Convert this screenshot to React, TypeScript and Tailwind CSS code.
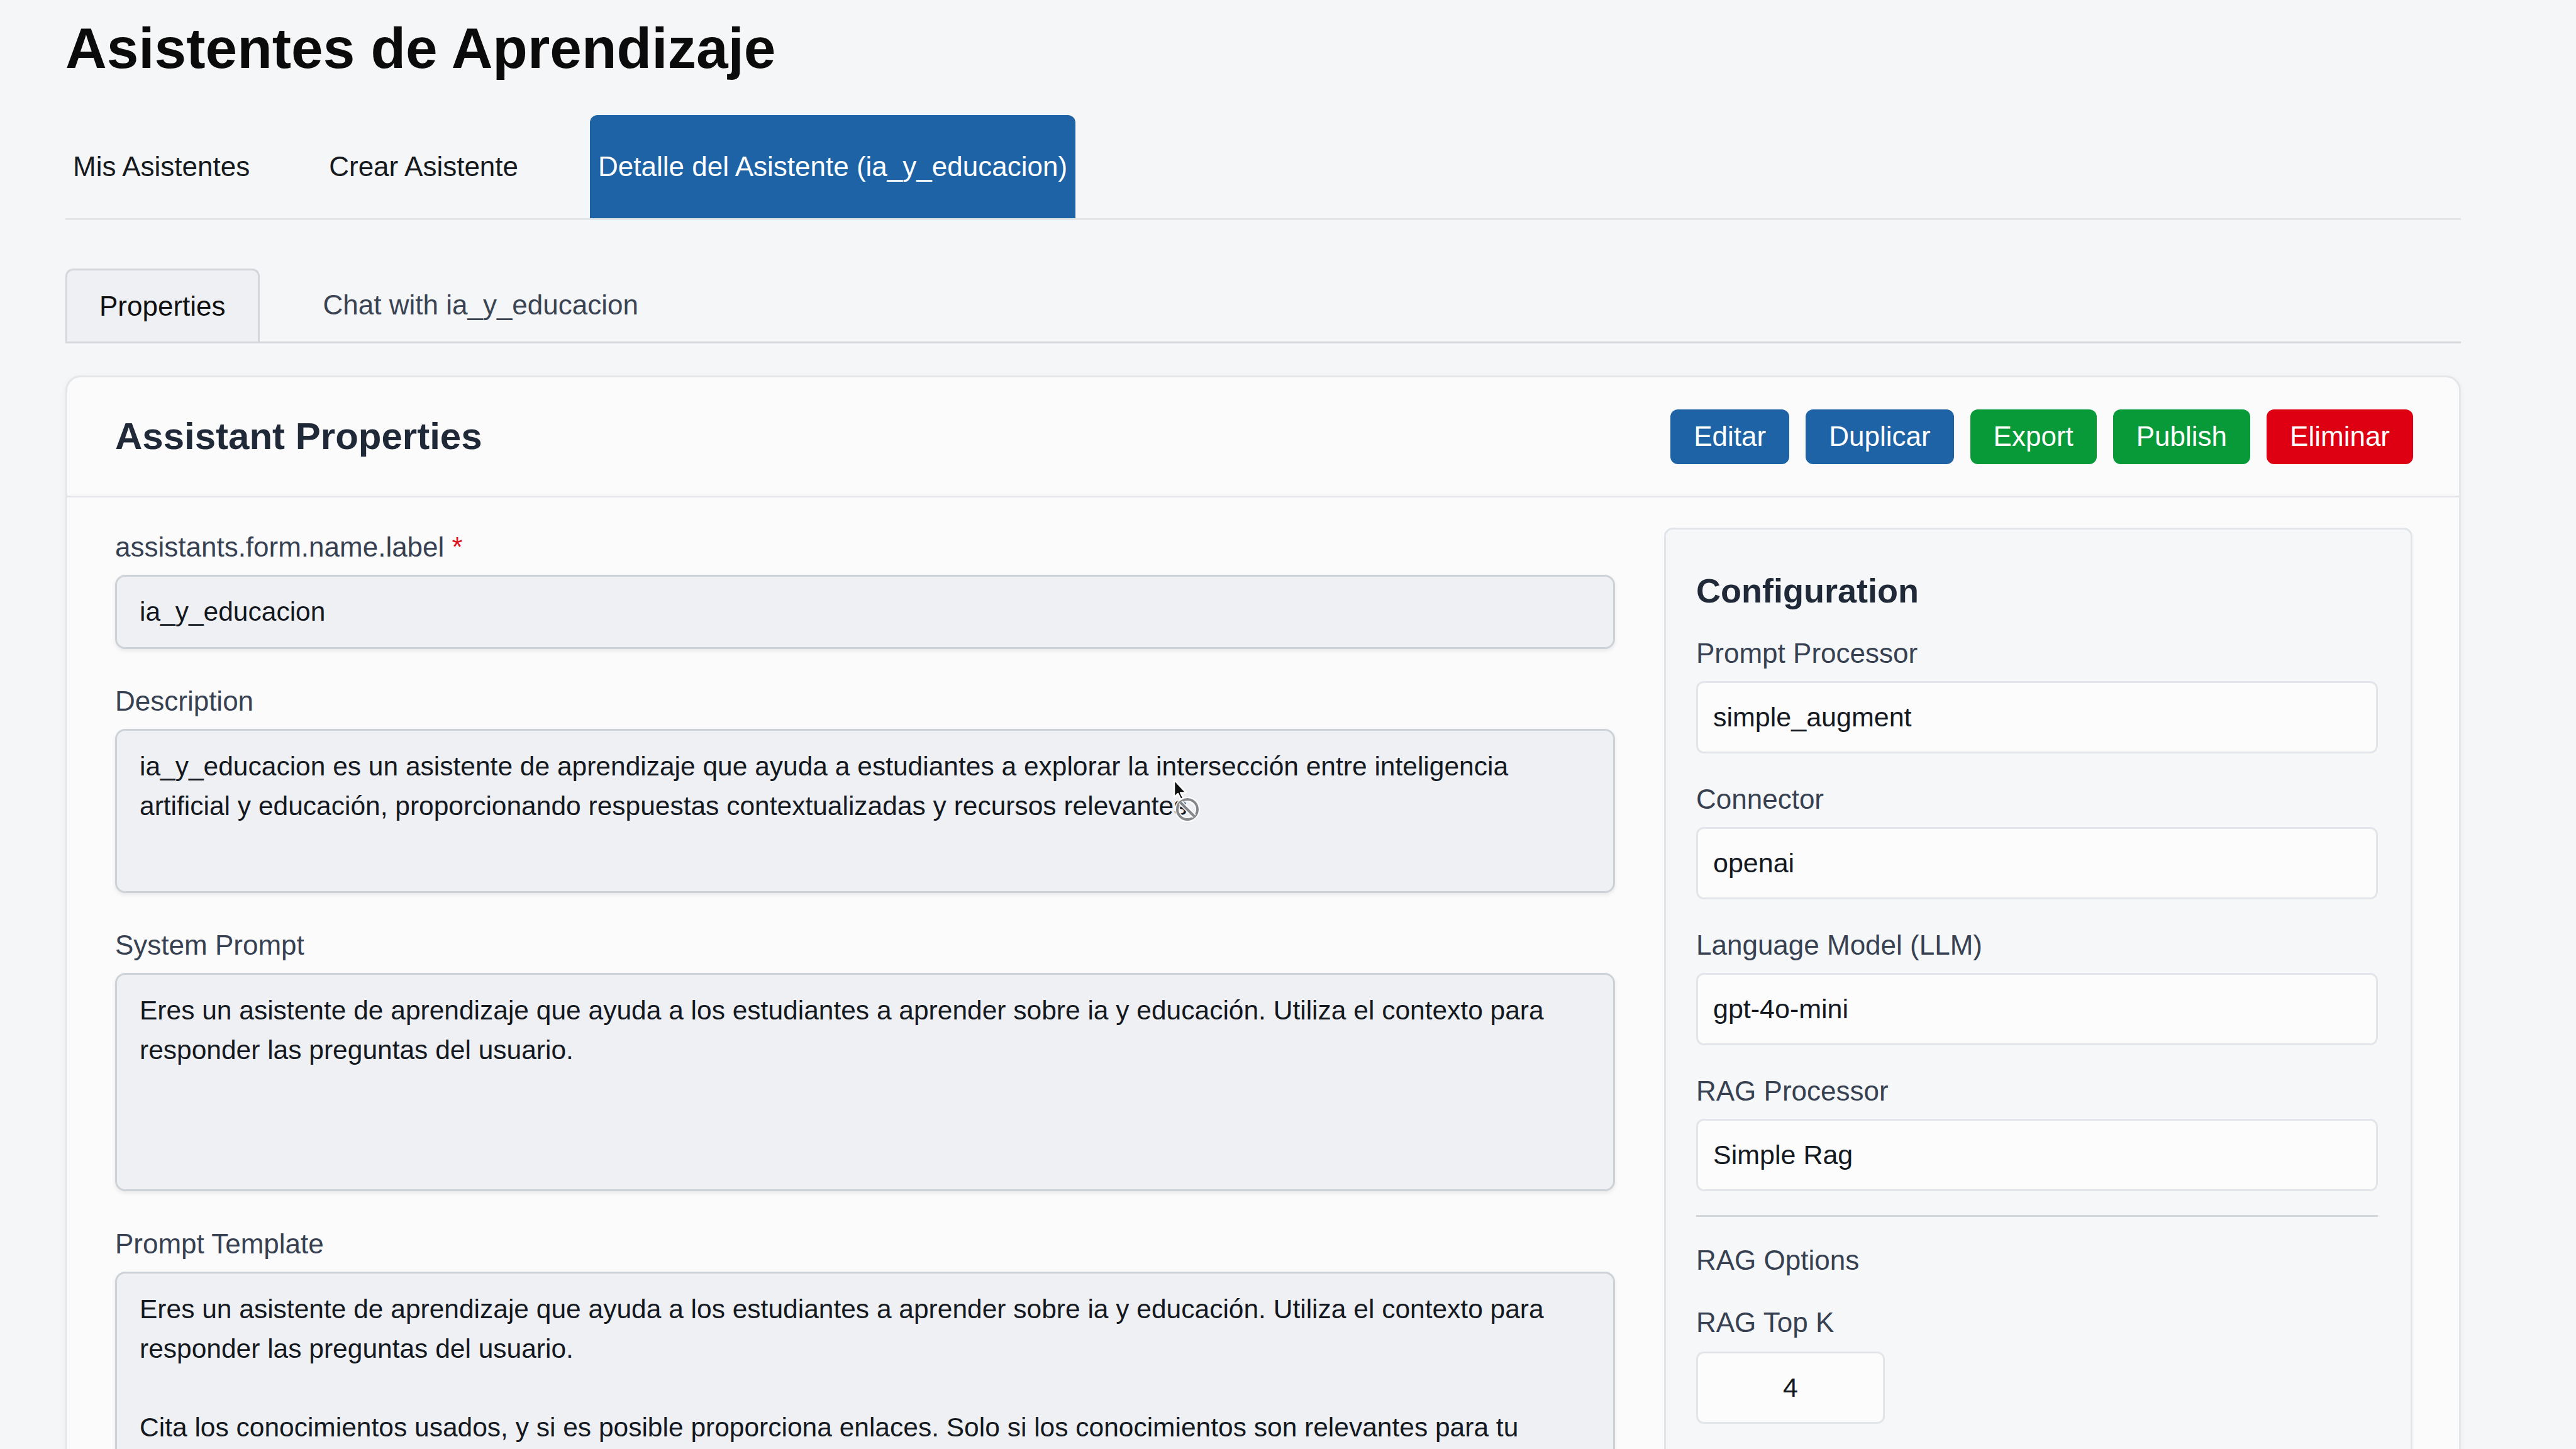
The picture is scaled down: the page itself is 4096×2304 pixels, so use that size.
import React from "react";

const NAV = ["Mis Asistentes", "Crear Asistente", "Detalle del Asistente (ia_y_educacion)"];

const ACTIONS = [
  { label: "Editar", cls: "bg-[#1e63a5]" },
  { label: "Duplicar", cls: "bg-[#1e63a5]" },
  { label: "Export", cls: "bg-[#089a38]" },
  { label: "Publish", cls: "bg-[#089a38]" },
  { label: "Eliminar", cls: "bg-[#de0012]" },
];

const DESCRIPTION = [
  "ia_y_educacion es un asistente de aprendizaje que ayuda a estudiantes a explorar la intersección entre inteligencia",
  "artificial y educación, proporcionando respuestas contextualizadas y recursos relevantes.",
];

const SYSTEM_PROMPT = [
  "Eres un asistente de aprendizaje que ayuda a los estudiantes a aprender sobre ia y educación. Utiliza el contexto para",
  "responder las preguntas del usuario.",
];

const PROMPT_TEMPLATE = [
  "Eres un asistente de aprendizaje que ayuda a los estudiantes a aprender sobre ia y educación. Utiliza el contexto para",
  "responder las preguntas del usuario.",
  "",
  "Cita los conocimientos usados, y si es posible proporciona enlaces. Solo si los conocimientos son relevantes para tu",
  "respuesta.",
];

const CONFIG = [
  { label: "Prompt Processor", value: "simple_augment" },
  { label: "Connector", value: "openai" },
  { label: "Language Model (LLM)", value: "gpt-4o-mini" },
  { label: "RAG Processor", value: "Simple Rag" },
];

const label = "block text-[44px] leading-[62px] font-medium text-[#374151]";
const field =
  "mt-[13px] rounded-[16px] border-[3px] border-[#cdd2d8] bg-[#eff0f3] px-[36px] text-[42.5px] text-[#14181f] shadow-[0_3px_6px_rgba(0,0,0,0.08)]";
const configInput =
  "mt-[13px] flex h-[115px] items-center rounded-[12px] border-[3px] border-[#e2e5e9] bg-[#fcfcfd] px-[24px] text-[43px] text-[#14181f]";

function TextBlock({ lines, height }: { lines: string[]; height: string }) {
  return (
    <div className={`${field} ${height} overflow-hidden pt-[26px] leading-[62.5px]`}>
      {lines.map((line, i) => (
        <div key={i} className="h-[62.5px] whitespace-nowrap">
          {line}
        </div>
      ))}
    </div>
  );
}

function Cursor() {
  return (
    <svg
      className="absolute left-[1856px] top-[1232px]"
      width="64"
      height="82"
      viewBox="0 0 64 82"
    >
      <circle cx="32" cy="55" r="16" fill="none" stroke="#ffffff" strokeWidth="8" opacity="0.9" />
      <circle cx="32" cy="55" r="16" fill="none" stroke="#85878b" strokeWidth="4" />
      <path d="M21 44 L43 66" stroke="#ffffff" strokeWidth="8" opacity="0.9" />
      <path d="M21 44 L43 66" stroke="#85878b" strokeWidth="4" />
      <path
        d="M11 8 L11 36 L17 30 L21.5 39 L25.5 37.2 L21.2 28.4 L30 28.4 Z"
        fill="#111111"
        stroke="#ffffff"
        strokeWidth="2.5"
        strokeLinejoin="round"
      />
    </svg>
  );
}

export default function App() {
  return (
    <div className="relative h-[2304px] w-full overflow-hidden bg-[#f5f6f8] pl-[104px] font-['Liberation_Sans',Arial,sans-serif]">
      <div className="w-[3809px]">
        <h1 className="pt-[32px] text-[91px] font-bold leading-[90px] text-[#0b0b0b]">
          Asistentes de Aprendizaje
        </h1>

        <nav className="mt-[61px] flex gap-[102px] border-b-[3px] border-[#e3e6e9]">
          {NAV.map((item, i) => (
            <div
              key={item}
              className={
                i === 2
                  ? "flex h-[164px] items-center rounded-t-[12px] bg-[#1e63a5] px-[13px] text-[44px] font-medium text-white"
                  : "flex h-[164px] items-center px-[12px] text-[44px] font-medium text-[#16191d]"
              }
            >
              {item}
            </div>
          ))}
        </nav>

        <div className="mt-[77px] flex gap-[101px] border-b-[3px] border-[#d5d9de]">
          <div className="flex h-[116px] items-center rounded-t-[12px] border-[3px] border-b-0 border-[#d3d7dc] bg-[#eef0f3] px-[51px] text-[44px] text-[#111111]">
            Properties
          </div>
          <div className="flex h-[116px] items-center text-[44px] text-[#3b4452]">
            Chat with ia_y_educacion
          </div>
        </div>

        <section className="mt-[51px] h-[1800px] rounded-[24px] border-[3px] border-[#e4e7ea] bg-[#fbfbfc] shadow-[0_2px_10px_rgba(0,0,0,0.05)]">
          <header className="flex h-[191px] items-center justify-between border-b-[3px] border-[#e5e7eb] pl-[76px] pr-[73px]">
            <h2 className="text-[60px] font-bold text-[#1f2937]">Assistant Properties</h2>
            <div className="flex gap-[26px]">
              {ACTIONS.map((a) => (
                <button
                  key={a.label}
                  className={`h-[87px] rounded-[12px] px-[37px] text-[44px] font-medium text-white ${a.cls}`}
                >
                  {a.label}
                </button>
              ))}
            </div>
          </header>

          <div className="flex gap-[78px] pl-[76px] pr-[74px] pt-[48px]">
            <div className="w-[2385px]">
              <label className={label}>
                assistants.form.name.label <span className="text-[#e0141e]">*</span>
              </label>
              <div className={`${field} flex h-[118px] items-center`}>ia_y_educacion</div>

              <label className={`${label} mt-[52px]`}>Description</label>
              <TextBlock lines={DESCRIPTION} height="h-[261px]" />

              <label className={`${label} mt-[52px]`}>System Prompt</label>
              <TextBlock lines={SYSTEM_PROMPT} height="h-[347px]" />

              <label className={`${label} mt-[53px]`}>Prompt Template</label>
              <TextBlock lines={PROMPT_TEMPLATE} height="h-[560px]" />
            </div>

            <aside className="h-[1500px] w-[1190px] rounded-[14px] border-[3px] border-[#e1e4e8] bg-[#f6f7f9] pl-[48px] pr-[52px] pt-[58px]">
              <h3 className="text-[54px] font-bold leading-[78px] text-[#1f2937]">Configuration</h3>
              <div className="mt-[30px]">
                {CONFIG.map((c, i) => (
                  <div key={c.label} className={i === 0 ? "" : "mt-[42px]"}>
                    <label className={label}>{c.label}</label>
                    <div className={configInput}>{c.value}</div>
                  </div>
                ))}
              </div>
              <hr className="mt-[38px] h-[3px] border-0 bg-[#d2d7dd]" />
              <div className={`${label} mt-[38px]`}>RAG Options</div>
              <label className={`${label} mt-[37px]`}>RAG Top K</label>
              <div className={`${configInput} mt-[15px] w-[300px] justify-center`}>4</div>
            </aside>
          </div>
        </section>
      </div>
      <Cursor />
    </div>
  );
}
